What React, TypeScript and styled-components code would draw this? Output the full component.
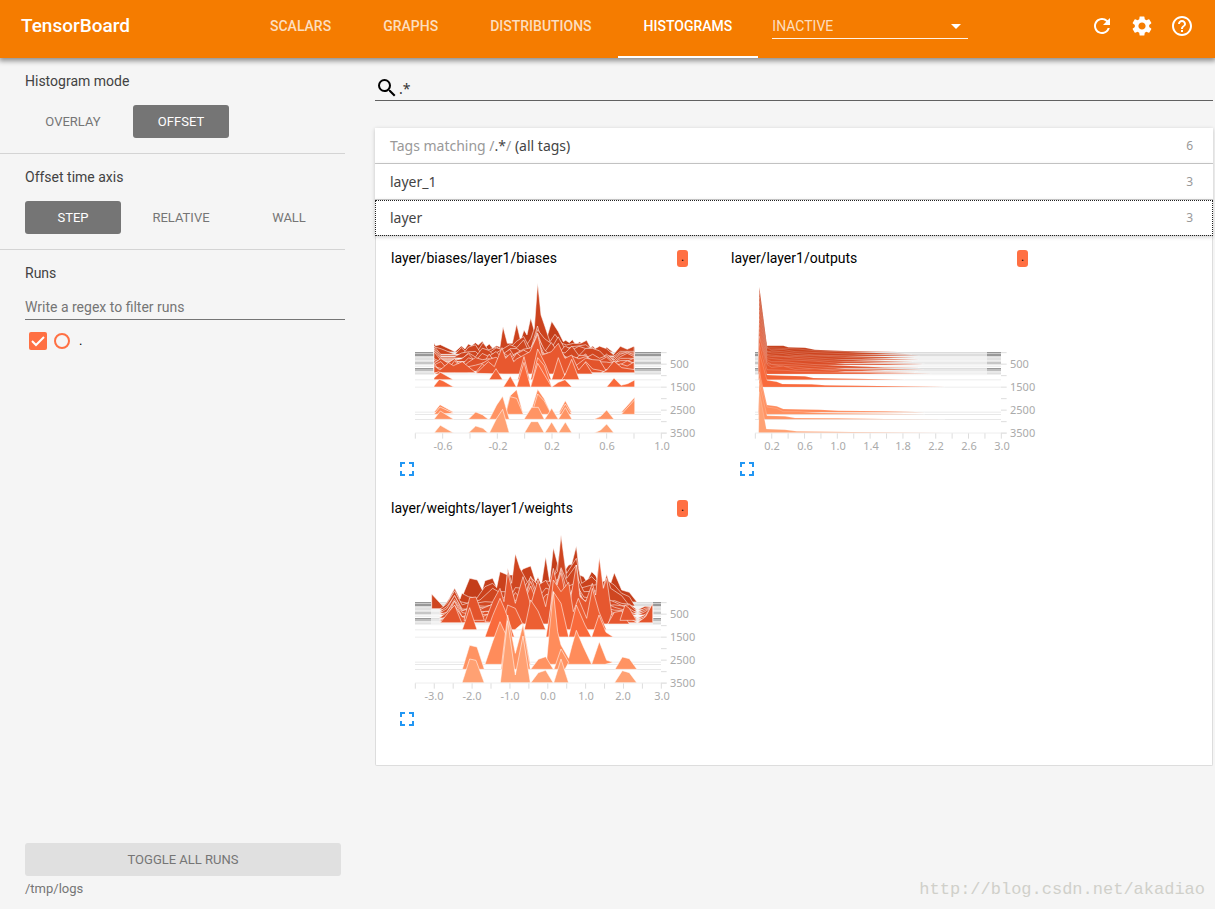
import React from "react";
import styled, { createGlobalStyle } from "styled-components";
import {
  MdArrowDropDown,
  MdFullscreen,
  MdHelpOutline,
  MdRefresh,
  MdSearch,
  MdSettings,
} from "react-icons/md";

const GlobalStyle = createGlobalStyle`
  *, *::before, *::after { box-sizing: border-box; }
  body {
    margin: 0;
    background: #f5f5f5;
    color: #424242;
    font-family: Roboto, sans-serif;
    font-size: 14px;
  }
  button, input, select { font-family: inherit; }
`;

const Page = styled.div`
  position: relative;
  display: flex;
  flex-direction: column;
  min-height: 100vh;
`;

const Header = styled.header`
  position: relative;
  display: flex;
  height: 58px;
  background: #f57c00;
  color: #fff;
  box-shadow: 0 2px 5px 1px rgba(0, 0, 0, 0.42);
`;

const Brand = styled.h1`
  flex: none;
  width: 244px;
  margin: 0;
  padding-left: 21px;
  font-size: 19px;
  font-weight: 500;
  line-height: 52px;
`;

const Tabs = styled.nav`
  display: flex;
`;

const Tab = styled.a<{ $active?: boolean }>`
  padding: 0 26px;
  border-bottom: 2px solid ${(p) => (p.$active ? "#fff" : "transparent")};
  color: ${(p) => (p.$active ? "#fff" : "rgba(255, 255, 255, 0.76)")};
  font-size: 14px;
  font-weight: 500;
  line-height: 52px;
  text-decoration: none;
`;

const SelectWrap = styled.label`
  position: relative;
  width: 196px;
  height: 39px;
  margin-left: 14px;
  border-bottom: 1px solid rgba(255, 255, 255, 0.9);

  svg {
    position: absolute;
    right: 0;
    top: 14px;
    pointer-events: none;
  }
`;

const Select = styled.select`
  width: 100%;
  height: 38px;
  padding: 14px 0 0;
  border: 0;
  background: transparent;
  color: rgba(255, 255, 255, 0.76);
  font-size: 14px;
  appearance: none;
`;

const Actions = styled.div`
  display: flex;
  gap: 16px;
  margin-left: auto;
  padding: 14px 21px 0 0;
`;

const IconButton = styled.button<{ $color?: string }>`
  display: flex;
  width: 24px;
  height: 24px;
  padding: 0;
  border: 0;
  background: none;
  color: ${(p) => p.$color ?? "#fff"};
  cursor: pointer;
`;

const Body = styled.div`
  display: flex;
  flex: 1;
`;

const Sidebar = styled.aside`
  display: flex;
  flex: none;
  flex-direction: column;
  width: 345px;
`;

const Section = styled.section<{ $last?: boolean }>`
  padding: 15px 0 15px 25px;
  border-bottom: ${(p) => (p.$last ? "0" : "1px solid #d4d4d4")};
`;

const SectionTitle = styled.h2`
  margin: 0 0 16px;
  font-size: 14px;
  font-weight: 400;
  line-height: 16px;
`;

const ModeRow = styled.div`
  display: flex;
  gap: 12px;
`;

const ModeButton = styled.button<{ $on?: boolean }>`
  width: 96px;
  height: 33px;
  padding: 0;
  border: 0;
  border-radius: 3px;
  background: ${(p) => (p.$on ? "#757575" : "transparent")};
  color: ${(p) => (p.$on ? "#fff" : "#757575")};
  font-size: 13px;
`;

const RunsInput = styled.input`
  display: block;
  width: 100%;
  height: 23px;
  padding: 0 0 2px;
  border: 0;
  border-bottom: 1px solid #757575;
  background: transparent;
  font-size: 14px;
  outline: none;

  &::placeholder { color: #757575; opacity: 1; }
`;

const RunRow = styled.div`
  display: flex;
  align-items: center;
  gap: 7px;
  padding: 12px 4px;
  color: #000;
`;

const Tick = styled.input`
  width: 18px;
  height: 18px;
  margin: 0;
  border-radius: 2px;
  background: #ff7043;
  appearance: none;
`;

const TickMark = styled.svg`
  position: absolute;
  left: 0;
  top: 0;
  pointer-events: none;
`;

const TickWrap = styled.span`
  position: relative;
  display: flex;
`;

const RunRadio = styled.input`
  width: 16px;
  height: 16px;
  margin: 0;
  border: 2px solid #ff7043;
  border-radius: 50%;
  appearance: none;
`;

const RunName = styled.label`
  padding-left: 2px;
  font-size: 13px;
  line-height: 16px;
`;

const SidebarFoot = styled.footer`
  margin-top: auto;
  padding: 0 4px 12px 25px;
`;

const ToggleAll = styled.button`
  display: block;
  width: 100%;
  height: 33px;
  border: 0;
  border-radius: 3px;
  background: #e0e0e0;
  color: #757575;
  font-size: 13px;
`;

const LogDir = styled.p`
  margin: 5px 0 0;
  color: #757575;
  font-size: 13px;
  line-height: 16px;
`;

const Main = styled.main`
  flex: 1;
  min-width: 0;
  padding: 18px 2px 24px 0;
  margin-left: 30px;
`;

const SearchBar = styled.label`
  display: flex;
  align-items: flex-start;
  height: 25px;
  margin-bottom: 27px;
  border-bottom: 1px solid #616161;
  color: #000;

  svg { flex: none; }
`;

const SearchInput = styled.input`
  flex: 1;
  height: 24px;
  padding: 0;
  border: 0;
  background: transparent;
  color: #333;
  font-family: "Noto Sans", sans-serif;
  font-size: 14px;
  outline: none;
`;

const TagRow = styled.button<{ $focused?: boolean }>`
  position: relative;
  display: flex;
  align-items: center;
  justify-content: space-between;
  width: 100%;
  height: 36px;
  padding: 0 20px 0 15px;
  border: 0;
  background: #fff;
  box-shadow: 0 1px 4px rgba(0, 0, 0, 0.2);
  border-bottom: 1px solid #ccc;
  color: #444;
  font-family: "Noto Sans", sans-serif;
  font-size: 14px;
  outline: ${(p) => (p.$focused ? "1px dotted #222" : "none")};
  outline-offset: -1px;
`;

const Muted = styled.span`
  color: #999;
`;

const Count = styled.span`
  color: #999;
  font-size: 12px;
`;

const Cards = styled.div`
  display: flex;
  flex-wrap: wrap;
  padding: 10px 15px 19px;
  border: 1px solid #ddd;
  border-top: 0;
  border-radius: 0 0 2px 2px;
  background: #fff;
`;

const Card = styled.article`
  width: 340px;
  height: 250px;
`;

const CardHead = styled.header`
  display: flex;
  align-items: center;
  justify-content: space-between;
  width: 297px;
  height: 24px;
  color: #000;
`;

const CardTitle = styled.h3`
  margin: 0;
  font-size: 14px;
  font-weight: 400;
`;

const Badge = styled.span`
  width: 11px;
  height: 17px;
  border-radius: 3px;
  background: #ff7043;
  font-size: 12px;
  line-height: 15px;
  text-align: center;
`;

const Plot = styled.svg`
  display: block;
  margin: 5px 0 0 14px;
  overflow: visible;

  text {
    fill: #aaa;
    font-family: "Noto Sans", sans-serif;
    font-size: 11px;
  }
`;

const CardFoot = styled.footer`
  padding: 2px 4px;
`;

const Watermark = styled.p`
  position: absolute;
  right: 10px;
  bottom: 9px;
  margin: 0;
  color: #d0d0ca;
  font-family: "Liberation Mono", monospace;
  font-size: 17px;
  line-height: 20px;
`;

type Pt = [number, number];
type Ridge = { base: number; color: string; shapes: Pt[][] };
type ChartData = {
  name: string;
  from: number;
  to: number;
  stroke: number;
  ridges: Ridge[];
  ticks: number;
  labels: [number, string][];
};

// Histogram geometry is kept in thirds of a pixel.
const noise = (seed: number) => {
  const v = Math.sin(seed * 127.1 + 311.7) * 43758.5453;
  return v - Math.floor(v);
};

const line = (start: number, step: number, ys: number[], base: number): Pt[] => [
  [start, base],
  ...ys.map((y, i): Pt => [start + i * step, Math.min(y, base)]),
  [start + (ys.length - 1) * step, base],
];

const pts = (...v: number[]): Pt[] => {
  const out: Pt[] = [];
  for (let i = 0; i < v.length; i += 2) out.push([v[i], v[i + 1]]);
  return out;
};

const midBases = [243, 249, 254, 260, 265, 270, 279, 284, 289, 293];
const midColors = ["#cd441f", "#cf4620", "#d14721", "#d44923", "#d74b25", "#da4d27", "#dd5029", "#e0522a", "#e3542c", "#e5562d"];

const biases: Ridge[] = [
  {
    base: 231, color: "#c43e1a",
    shapes: [
      pts(87, 231, 87, 205, 92, 212, 106, 209, 150, 230, 169, 213, 180, 222, 190, 207, 200, 212, 211, 203, 220, 210, 232, 199, 243, 215, 253, 207, 263, 220, 274, 212, 300, 220,
        340, 220, 357, 165, 366, 180, 377, 129, 387, 165, 410, 180, 425, 190, 440, 139, 460, 170, 475, 200, 482, 196, 493, 203, 502, 194, 512, 208, 525, 200, 535, 212, 543, 200,
        555, 220, 563, 213, 575, 225, 584, 213, 595, 225, 605, 217, 624, 231),
    ],
  },
  {
    base: 238, color: "#cc431e",
    shapes: [
      pts(87, 238, 87, 215, 110, 222, 150, 238, 169, 218, 185, 232, 200, 212, 220, 225, 234, 203, 250, 225, 275, 216, 284, 222, 294, 155, 307, 205, 322, 205, 335, 147, 347, 198,
        365, 210, 378, 190, 388, 160, 398, 24, 408, 120, 420, 155, 435, 200, 450, 178, 470, 205, 485, 210, 505, 205, 525, 206, 545, 196, 560, 225, 575, 238),
      pts(630, 238, 648, 219, 665, 227, 689, 216, 689, 238),
    ],
  },
  ...midBases.map((base, r) => ({
    base, color: midColors[r],
    shapes: [
      line(87, 20.7, Array.from({ length: 30 }, (_, i) => {
        const d = (i - 15) / 6;
        const gap = (i === 26 || (i > 0 && i < 4)) && base < 275;
        const edge = i === 0 ? (base < 262 ? 30 : 14) : 0;
        const peak = i === 15 ? 40 + 50 * (1 - r / 10) : 0;
        const tail = i > 26 ? 20 : 0;
        const bump = 24 * Math.exp(-d * d) * (0.5 + noise(r * 7 + i));
        return gap ? base - 4 : base - Math.max(edge, tail, peak, bump + noise(r * 31 + i * 3) * 40 - 8);
      }), base),
    ],
  })),
  {
    base: 293, color: "#e5562d",
    shapes: [
      pts(87, 293, 87, 272, 105, 285, 131, 263, 145, 272, 172, 260, 212, 293),
      pts(590, 293, 605, 285, 627, 258, 650, 278, 689, 284, 689, 293),
    ],
  },
  {
    base: 297, color: "#e8582f",
    shapes: [
      pts(213, 295, 234, 275, 250, 260, 268, 275, 291, 218, 302, 250, 316, 235, 326, 260, 335, 252, 357, 240, 375, 230, 398, 178, 412, 240, 439, 230, 460, 205, 480, 250, 500, 240, 521, 285, 541, 262, 563, 297, 297, 297),
      pts(87, 297, 100, 290, 115, 297),
    ],
  },
  {
    base: 314, color: "#f06235",
    shapes: [
      pts(87, 314, 87, 309, 106, 292, 145, 314),
      pts(252, 314, 273, 281, 293, 314),
      pts(338, 314, 357, 245, 374, 314),
      pts(377, 314, 398, 222, 422, 270, 439, 314),
      pts(440, 314, 460, 248, 484, 314),
      pts(470, 314, 480, 300, 500, 253, 523, 314),
    ],
  },
  {
    base: 336, color: "#f96a3c",
    shapes: [
      pts(87, 336, 87, 333, 103, 313, 115, 318, 146, 336),
      pts(295, 336, 316, 303, 334, 336),
      pts(335, 336, 357, 262, 377, 336),
      pts(377, 336, 398, 248, 418, 272, 440, 336),
      pts(377, 336, 398, 265, 440, 336),
      pts(440, 336, 460, 322, 480, 314, 501, 336),
      pts(605, 336, 627, 309, 648, 331, 668, 326, 689, 315, 689, 336),
    ],
  },
  {
    base: 412, color: "#ff8a5a",
    shapes: [
      pts(87, 412, 105, 389, 146, 412),
      pts(302, 412, 315, 363, 335, 344, 353, 412),
      pts(377, 412, 398, 343, 418, 372, 436, 412),
      pts(462, 412, 481, 377, 500, 412),
      pts(649, 412, 689, 367, 689, 412),
    ],
  },
  {
    base: 418, color: "#ff8f5e",
    shapes: [
      pts(87, 418, 105, 396, 146, 415),
      pts(302, 418, 315, 365, 335, 370, 355, 418),
      pts(380, 418, 398, 357, 418, 378, 439, 418),
      pts(462, 418, 481, 387, 500, 418),
      pts(649, 418, 689, 374, 689, 418),
    ],
  },
  {
    base: 433, color: "#ff9464",
    shapes: [
      pts(87, 433, 106, 408, 146, 433),
      pts(190, 433, 212, 411, 232, 419, 250, 433),
      pts(253, 433, 275, 390, 293, 364, 313, 433),
      pts(357, 433, 380, 397, 400, 397, 418, 433),
      pts(419, 433, 440, 400, 460, 433),
      pts(460, 433, 481, 398, 501, 433),
      pts(567, 433, 587, 424, 605, 405, 627, 433),
    ],
  },
  {
    base: 474, color: "#ffa173",
    shapes: [
      pts(87, 474, 106, 451, 146, 474),
      pts(190, 474, 212, 453, 234, 460, 250, 474),
      pts(253, 474, 275, 430, 293, 403, 313, 474),
      pts(358, 474, 378, 440, 399, 440, 418, 474),
      pts(419, 474, 440, 441, 460, 474),
      pts(460, 474, 481, 441, 501, 474),
      pts(567, 474, 587, 465, 605, 447, 627, 474),
    ],
  },
];

const outputs: Ridge[] = [
  { base: 231, color: "#c43e1a", shapes: [pts(41, 231, 43, 36, 66, 212, 115, 212, 130, 217, 180, 218, 210, 224, 300, 228, 460, 231)] },
  { base: 238, color: "#ca421d", shapes: [pts(41, 238, 43, 52, 66, 218, 120, 220, 160, 222, 205, 227, 310, 231, 500, 238)] },
  ...midBases.map((base, r) => ({
    base, color: midColors[r],
    shapes: [
      pts(
        41, base, 43, 66 + r * 13,
        66, base - 17 - noise(r) * 8,
        80, base - 15 - noise(r + 5) * 6,
        115, base - 15 - noise(r + 9) * 5,
        150, base - 8 - noise(r + 3) * 8,
        210, base - 5 - noise(r + 4) * 7,
        300, base - 2 - noise(r + 7) * 5,
        420, base - 1 - noise(r + 8) * 2,
        460 + noise(r + 2) * 80, base,
      ),
    ],
  })),
  { base: 297, color: "#ea5a30", shapes: [pts(41, 297, 43, 185, 66, 284, 120, 286, 160, 289, 280, 292, 400, 295, 560, 297)] },
  { base: 314, color: "#f26335", shapes: [pts(41, 314, 43, 205, 66, 300, 120, 302, 180, 304, 205, 309, 370, 312, 480, 314)] },
  { base: 336, color: "#f96a3c", shapes: [pts(48, 336, 41, 225, 66, 316, 95, 320, 112, 327, 200, 328, 240, 331, 400, 333, 600, 336)] },
  { base: 412, color: "#ff8a5a", shapes: [pts(41, 412, 43, 290, 66, 390, 95, 394, 115, 402, 225, 404, 280, 407, 420, 409, 540, 412)] },
  { base: 418, color: "#ff8f5e", shapes: [pts(41, 418, 43, 310, 66, 396, 95, 400, 115, 410, 160, 410, 230, 414, 420, 416, 540, 418)] },
  { base: 433, color: "#ff9464", shapes: [pts(41, 433, 43, 325, 66, 422, 120, 424, 150, 429, 280, 430, 420, 432, 600, 433)] },
  { base: 474, color: "#ffa173", shapes: [pts(41, 474, 43, 350, 64, 462, 120, 464, 155, 469, 320, 471, 600, 474)] },
];

const weights: Ridge[] = [
  {
    base: 231, color: "#c43e1a",
    shapes: [
      pts(165, 231, 194, 160, 217, 165, 232, 195, 240, 167, 263, 160, 280, 200, 300, 190, 400, 190, 410, 175, 422, 95, 434, 170, 445, 68, 456, 110, 470, 150, 491, 120, 500, 118,
        514, 63, 524, 150, 536, 155, 545, 170, 560, 140, 572, 152, 590, 190, 612, 190, 628, 143, 650, 195, 673, 202, 696, 231),
    ],
  },
  {
    base: 243, color: "#ca411c",
    shapes: [
      pts(120, 243, 149, 190, 165, 222, 171, 205, 190, 215, 215, 220, 240, 185, 263, 175, 275, 188, 285, 140, 308, 150, 340, 150, 354, 132, 377, 123, 392, 170, 399, 157, 412, 185,
        430, 200, 455, 130, 468, 60, 485, 145, 514, 100, 530, 175, 560, 155, 580, 175, 605, 165, 628, 180, 650, 205, 673, 215, 690, 243),
    ],
  },
  {
    base: 251, color: "#cf4620",
    shapes: [
      pts(80, 251, 80, 207, 103, 232, 115, 245, 149, 200, 165, 230, 190, 235, 225, 225, 263, 190, 280, 200, 303, 200, 308, 130, 320, 175, 331, 86, 345, 130, 356, 150, 375, 185,
        400, 175, 422, 190, 440, 160, 457, 140, 468, 30, 485, 160, 514, 120, 525, 190, 560, 180, 573, 180, 583, 105, 594, 190, 605, 148, 617, 190, 650, 212, 680, 251),
    ],
  },
  ...midBases.slice(2).map((base, r) => ({
    base, color: midColors[r + 2],
    shapes: [
      line(103, 22.83, Array.from({ length: 27 }, (_, i) => {
        if (i < 1 || i > 25) return base;
        const d = (i - 15) / 6.5;
        const spike = [10, 12, 16, 18, 21].includes(i) ? 45 : 0;
        return base - 6 - (i === 2 ? 38 : 0) - Math.exp(-d * d) * (28 + spike + noise(r * 17 + i * 5) * 55) - noise(r + i * 9) * 12;
      }), base),
      pts(698, base, 720, base - 10, 743, 245, 743, base),
    ],
  })),
  {
    base: 293, color: "#e3542c",
    shapes: [
      pts(106, 293, 130, 262, 149, 240, 170, 293),
      pts(177, 286, 194, 218, 213, 216, 238, 286),
      pts(698, 293, 722, 275, 743, 235, 743, 293),
    ],
  },
  {
    base: 297, color: "#e6572f",
    shapes: [
      pts(240, 290, 263, 230, 285, 190, 297, 230, 308, 140, 331, 235, 354, 155, 377, 240, 399, 165, 422, 245, 445, 130, 456, 180, 468, 143, 491, 255, 514, 120, 525, 215, 542, 230, 562, 175, 572, 210, 583, 97, 595, 190, 605, 160, 620, 265, 610, 297, 300, 297),
      pts(608, 297, 628, 262, 650, 258, 673, 297),
      pts(645, 286, 660, 240, 673, 250, 694, 286),
    ],
  },
  {
    base: 314, color: "#ed5f33",
    shapes: [
      pts(172, 314, 194, 248, 216, 314),
      pts(290, 314, 308, 240, 331, 250, 352, 295, 330, 314),
      pts(358, 314, 377, 225, 399, 258, 422, 314),
      pts(430, 314, 445, 165, 468, 200, 491, 172, 505, 260, 520, 220, 545, 280, 562, 190, 582, 260, 604, 314),
    ],
  },
  {
    base: 336, color: "#f96a3c",
    shapes: [
      pts(240, 336, 263, 272, 285, 220, 300, 255, 328, 336),
      pts(423, 336, 445, 200, 468, 235, 491, 336),
      pts(491, 336, 514, 240, 540, 300, 559, 336),
      pts(560, 336, 582, 270, 603, 322, 625, 336),
    ],
  },
  {
    base: 418, color: "#ff8c5b",
    shapes: [
      pts(240, 418, 263, 350, 285, 290, 308, 340, 331, 400, 354, 295, 376, 418),
      pts(424, 418, 432, 330, 445, 200, 458, 320, 468, 360, 491, 400, 500, 365, 514, 316, 535, 365, 560, 418),
      pts(560, 418, 583, 350, 605, 406, 625, 412, 600, 418),
    ],
  },
  {
    base: 433, color: "#ff9362",
    shapes: [
      pts(172, 433, 194, 361, 216, 366, 238, 433),
      pts(288, 433, 308, 270, 331, 385, 354, 300, 376, 433),
      pts(377, 433, 400, 403, 422, 395, 445, 433),
      pts(447, 433, 468, 372, 491, 412, 480, 433),
      pts(630, 433, 652, 396, 673, 401, 696, 433),
    ],
  },
  {
    base: 474, color: "#ffa173",
    shapes: [
      pts(171, 474, 194, 402, 213, 406, 238, 474),
      pts(286, 474, 308, 287, 331, 450, 354, 333, 376, 474),
      pts(377, 474, 400, 443, 422, 436, 445, 474),
      pts(446, 474, 468, 402, 491, 474),
      pts(628, 474, 652, 437, 673, 443, 696, 474),
    ],
  },
];

const charts: ChartData[] = [
  {
    name: "layer/biases/layer1/biases", from: 87, to: 689, stroke: 3, ridges: biases, ticks: 9,
    labels: [[38, "-0.6"], [93, "-0.2"], [147, "0.2"], [202, "0.6"], [257, "1.0"]],
  },
  {
    name: "layer/layer1/outputs", from: 42, to: 726, stroke: 1, ridges: outputs, ticks: 15,
    labels: [[27, "0.2"], [60, "0.6"], [93, "1.0"], [126, "1.4"], [158, "1.8"], [191, "2.2"], [224, "2.6"], [257, "3.0"]],
  },
  {
    name: "layer/weights/layer1/weights", from: 78, to: 744, stroke: 3, ridges: weights, ticks: 13,
    labels: [[29, "-3.0"], [67, "-2.0"], [105, "-1.0"], [143, "0.0"], [181, "1.0"], [218, "2.0"], [257, "3.0"]],
  },
];

const bands: [number, number, string][] = [
  [231, 4, "#969696"], [235, 2, "#c4c4c4"], [237, 6, "#999"], [243, 4, "#ddd"],
  [247, 8, "#e0e0e0"], [256, 5, "#e4e4e4"], [261, 6, "#c6c6c6"], [268, 2, "#ddd"],
  [272, 3, "#e6e6e6"], [279, 3, "#999"], [282, 7, "#bdbdbd"], [291, 2, "#ddd"], [295, 3, "#d0d0d0"],
  [313, 3, "#eee"], [335, 3, "#eee"], [410, 3, "#eaeaea"], [417, 3, "#e8e8e8"], [432, 3, "#e8e8e8"],
];

function Histogram({ data }: { data: ChartData }) {
  return (
    <Plot width="300" height="180" role="img" aria-label={data.name}>
      <g transform="scale(0.33333)">
        {bands.map(([y, h, fill]) => (
          <rect key={y} x="30" y={y} width="738" height={h} fill={fill} />
        ))}
        <rect x={data.from} y="231" width={data.to - data.from} height="70" fill="#f6f6f6" opacity="0.72" />
        {data.ridges.map((r, i) => (
          <g key={i} fill={r.color} stroke="#fff" strokeOpacity="0.55" strokeWidth={data.stroke}>
            {r.shapes.map((s, j) => (
              <polygon key={j} points={s.map((p) => p.join(",")).join(" ")} />
            ))}
          </g>
        ))}
        <g stroke="#ddd" strokeWidth="3">
          <path d="M30 474H785" stroke="#eee" />
          {Array.from({ length: data.ticks + 1 }, (_, i) => (
            <path key={i} d={`M${31 + (i * 738) / data.ticks} 475v16`} />
          ))}
          {Array.from({ length: 8 }, (_, i) => (
            <path key={i} d={`M768 ${233 + i * 34.5}h17`} />
          ))}
        </g>
      </g>
      {data.labels.map(([x, t]) => (
        <text key={x} x={x} y="175" textAnchor="middle">{t}</text>
      ))}
      {["500", "1500", "2500", "3500"].map((t, i) => (
        <text key={t} x="265" y={93 + i * 23}>{t}</text>
      ))}
    </Plot>
  );
}

export default function App() {
  return (
    <Page>
      <GlobalStyle />
      <Header>
        <Brand>TensorBoard</Brand>
        <Tabs>
          <Tab href="#scalars">SCALARS</Tab>
          <Tab href="#graphs">GRAPHS</Tab>
          <Tab href="#distributions">DISTRIBUTIONS</Tab>
          <Tab href="#histograms" $active>HISTOGRAMS</Tab>
        </Tabs>
        <SelectWrap>
          <Select aria-label="Inactive dashboards">
            <option>INACTIVE</option>
          </Select>
          <MdArrowDropDown size={24} />
        </SelectWrap>
        <Actions>
          <IconButton aria-label="Reload"><MdRefresh size={24} /></IconButton>
          <IconButton aria-label="Settings"><MdSettings size={24} /></IconButton>
          <IconButton aria-label="Help"><MdHelpOutline size={24} /></IconButton>
        </Actions>
      </Header>
      <Body>
        <Sidebar>
          <Section>
            <SectionTitle>Histogram mode</SectionTitle>
            <ModeRow>
              <ModeButton>OVERLAY</ModeButton>
              <ModeButton $on>OFFSET</ModeButton>
            </ModeRow>
          </Section>
          <Section>
            <SectionTitle>Offset time axis</SectionTitle>
            <ModeRow>
              <ModeButton $on>STEP</ModeButton>
              <ModeButton>RELATIVE</ModeButton>
              <ModeButton>WALL</ModeButton>
            </ModeRow>
          </Section>
          <Section $last>
            <SectionTitle>Runs</SectionTitle>
            <RunsInput aria-label="Filter runs" placeholder="Write a regex to filter runs" />
            <RunRow>
              <TickWrap>
                <Tick type="checkbox" id="run" defaultChecked />
                <TickMark width="18" height="18" viewBox="0 0 18 18">
                  <path d="M3 9l4 4 8-8" fill="none" stroke="#fff" strokeWidth="2" />
                </TickMark>
              </TickWrap>
              <RunRadio type="radio" aria-label="Only this run" />
              <RunName htmlFor="run">.</RunName>
            </RunRow>
          </Section>
          <SidebarFoot>
            <ToggleAll>TOGGLE ALL RUNS</ToggleAll>
            <LogDir>/tmp/logs</LogDir>
          </SidebarFoot>
        </Sidebar>
        <Main>
          <SearchBar>
            <MdSearch size={24} />
            <SearchInput aria-label="Filter tags" defaultValue=".*" />
          </SearchBar>
          <TagRow>
            <span><Muted>Tags matching /</Muted>.*<Muted>/</Muted> (all tags)</span>
            <Count>6</Count>
          </TagRow>
          <TagRow>
            <span>layer_1</span>
            <Count>3</Count>
          </TagRow>
          <TagRow $focused>
            <span>layer</span>
            <Count>3</Count>
          </TagRow>
          <Cards>
            {charts.map((c) => (
              <Card key={c.name}>
                <CardHead>
                  <CardTitle>{c.name}</CardTitle>
                  <Badge>.</Badge>
                </CardHead>
                <Histogram data={c} />
                <CardFoot>
                  <IconButton $color="#2196f3" aria-label="Toggle full size">
                    <MdFullscreen size={24} />
                  </IconButton>
                </CardFoot>
              </Card>
            ))}
          </Cards>
        </Main>
      </Body>
      <Watermark>http://blog.csdn.net/akadiao</Watermark>
    </Page>
  );
}
